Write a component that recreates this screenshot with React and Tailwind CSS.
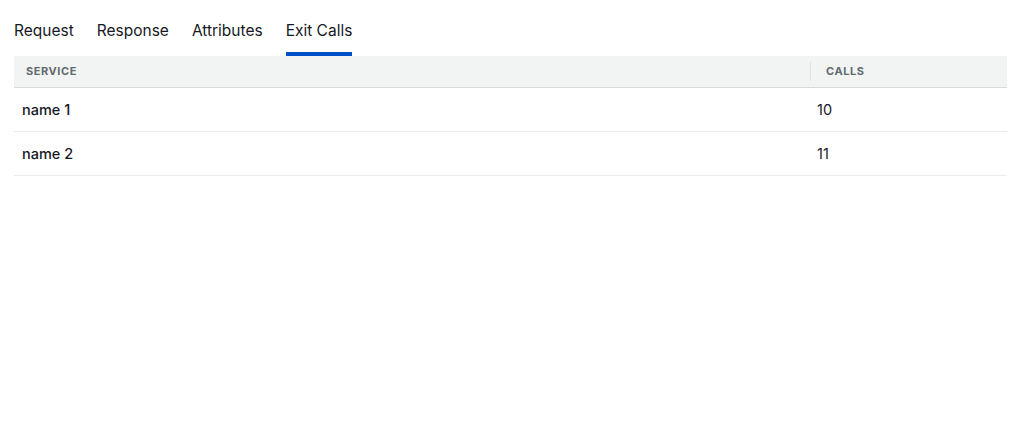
export default function App() {
  const tabs = ["Request", "Response", "Attributes", "Exit Calls"];
  const rows = [
    { name: "name 1", calls: 10 },
    { name: "name 2", calls: 11 },
  ];
  return (
    <div className="w-[1023px] h-[432px] bg-white px-[14px] text-[#16191f]" style={{ fontFamily: "Inter, 'Open Sans', sans-serif" }}>
      <div className="flex gap-[23px] h-[56px]">
        {tabs.map((t, i) => (
          <div key={t} className="flex flex-col justify-between h-full">
            <div className="pt-[21px] text-[15.5px] leading-[20px] text-[#16191f]">{t}</div>
            <div className={i === 3 ? "h-[4px] bg-[#0050c8]" : "h-[4px]"} />
          </div>
        ))}
      </div>
      <div className="w-[993px]">
        <div className="flex h-[32px] bg-[#f2f3f3] border-b border-[#d5dbdb] items-center text-[11px] font-bold tracking-[0.05em] text-[#5f6b6d]">
          <div className="w-[796px] pl-[12px]">SERVICE</div>
          <div className="w-px h-[19px] bg-[#dfe3e3]" />
          <div className="pl-[15px]">CALLS</div>
        </div>
        {rows.map((r) => (
          <div key={r.name} className="flex h-[44px] items-center border-b border-[#eaeded] text-[14.5px]">
            <div className="w-[796px] pl-[8px] font-medium">{r.name}</div>
            <div className="pl-[7px] font-normal">{r.calls}</div>
          </div>
        ))}
      </div>
    </div>
  );
}
